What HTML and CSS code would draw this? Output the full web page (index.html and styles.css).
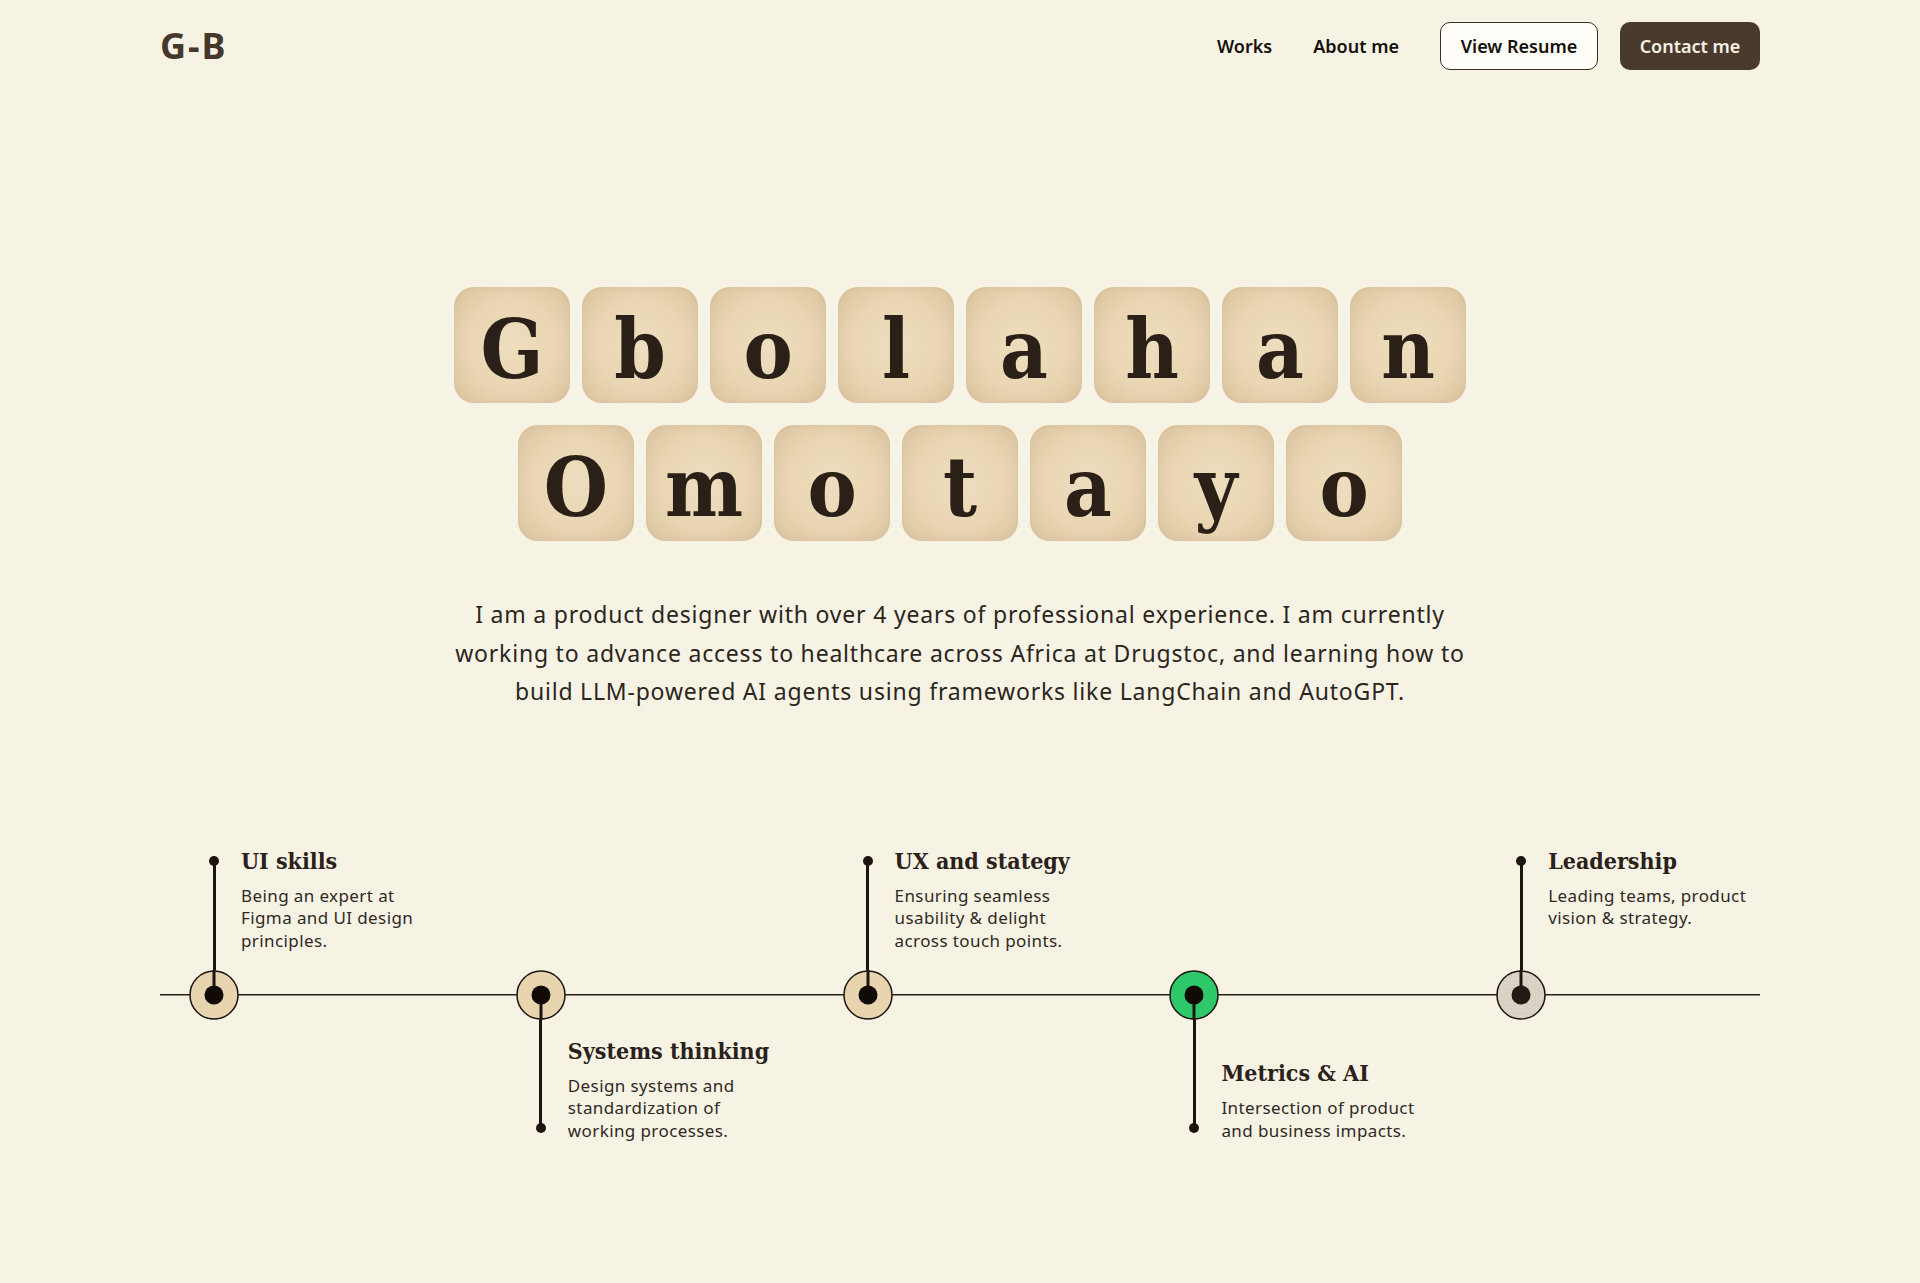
FILE: index.html
```html
<!DOCTYPE html>
<html>
<head>
    <meta charset="UTF-8">
    <title>Gbolahan Omotayo — Product Designer</title>
    <link rel="stylesheet" href="styles.css">
</head>
<body>
<div class="page">
    <header class="top-bar">
        <a class="logo" href="#">G-B</a>
        <nav class="nav">
            <a class="nav-link" href="#">Works</a>
            <a class="nav-link" href="#">About me</a>
            <a class="btn btn-outline" href="#">View Resume</a>
            <a class="btn btn-dark" href="#">Contact me</a>
        </nav>
    </header>

    <section class="hero">
        <div class="tile-row">
            <span class="tile">G</span>
            <span class="tile">b</span>
            <span class="tile">o</span>
            <span class="tile">l</span>
            <span class="tile">a</span>
            <span class="tile">h</span>
            <span class="tile">a</span>
            <span class="tile">n</span>
        </div>
        <div class="tile-row">
            <span class="tile">O</span>
            <span class="tile">m</span>
            <span class="tile">o</span>
            <span class="tile">t</span>
            <span class="tile">a</span>
            <span class="tile">y</span>
            <span class="tile">o</span>
        </div>
        <p class="intro">
            I am a product designer with over 4 years of professional experience. I am currently<br>
            working to advance access to healthcare across Africa at Drugstoc, and learning how to<br>
            build LLM-powered AI agents using frameworks like LangChain and AutoGPT.
        </p>
    </section>

    <section class="timeline">
        <div class="skill up">
            <div class="stem"><span class="stem-dot"></span><span class="stem-line"></span></div>
            <div class="skill-text">
                <h3>UI skills</h3>
                <p>Being an expert at<br>Figma and UI design<br>principles.</p>
            </div>
            <svg class="node" width="50" height="50" viewBox="0 0 50 50">
                <circle cx="25" cy="25" r="24" fill="#e9d4b0" stroke="#1c140e" stroke-width="1.5"/>
                <line x1="25" y1="0" x2="25" y2="25" stroke="#1c140e" stroke-width="3"/>
                <circle cx="25" cy="25" r="9.5" fill="#110b07"/>
            </svg>
        </div>

        <div class="skill down">
            <svg class="node" width="50" height="50" viewBox="0 0 50 50">
                <circle cx="25" cy="25" r="24" fill="#e9d4b0" stroke="#1c140e" stroke-width="1.5"/>
                <line x1="25" y1="25" x2="25" y2="50" stroke="#1c140e" stroke-width="3"/>
                <circle cx="25" cy="25" r="9.5" fill="#110b07"/>
            </svg>
            <div class="stem"><span class="stem-line"></span><span class="stem-dot"></span></div>
            <div class="skill-text">
                <h3>Systems thinking</h3>
                <p>Design systems and<br>standardization of<br>working processes.</p>
            </div>
        </div>

        <div class="skill up">
            <div class="stem"><span class="stem-dot"></span><span class="stem-line"></span></div>
            <div class="skill-text">
                <h3>UX and stategy</h3>
                <p>Ensuring seamless<br>usability &amp; delight<br>across touch points.</p>
            </div>
            <svg class="node" width="50" height="50" viewBox="0 0 50 50">
                <circle cx="25" cy="25" r="24" fill="#e9d4b0" stroke="#1c140e" stroke-width="1.5"/>
                <line x1="25" y1="0" x2="25" y2="25" stroke="#1c140e" stroke-width="3"/>
                <circle cx="25" cy="25" r="9.5" fill="#110b07"/>
            </svg>
        </div>

        <div class="skill down">
            <svg class="node" width="50" height="50" viewBox="0 0 50 50">
                <circle cx="25" cy="25" r="24" fill="#2ec86a" stroke="#1c140e" stroke-width="1.5"/>
                <line x1="25" y1="25" x2="25" y2="50" stroke="#1c140e" stroke-width="3"/>
                <circle cx="25" cy="25" r="9.5" fill="#110b07"/>
            </svg>
            <div class="stem"><span class="stem-line"></span><span class="stem-dot"></span></div>
            <div class="skill-text">
                <h3>Metrics &amp; AI</h3>
                <p>Intersection of product<br>and business impacts.</p>
            </div>
        </div>

        <div class="skill up">
            <div class="stem"><span class="stem-dot"></span><span class="stem-line"></span></div>
            <div class="skill-text">
                <h3>Leadership</h3>
                <p>Leading teams, product<br>vision &amp; strategy.</p>
            </div>
            <svg class="node" width="50" height="50" viewBox="0 0 50 50">
                <defs>
                    <pattern id="grain" width="4" height="4" patternUnits="userSpaceOnUse">
                        <rect width="4" height="4" fill="#d8d1c4"/>
                        <circle cx="1" cy="1" r="0.6" fill="#ece7dc"/>
                    </pattern>
                </defs>
                <circle cx="25" cy="25" r="24" fill="url(#grain)" stroke="#1c140e" stroke-width="1.5"/>
                <line x1="25" y1="0" x2="25" y2="25" stroke="#1c140e" stroke-width="3"/>
                <circle cx="25" cy="25" r="9.5" fill="#231a14"/>
            </svg>
        </div>
    </section>
</div>
</body>
</html>
```

FILE: styles.css
```css
body {
    margin: 0;
    background-color: #f7f3e4;
    color: #2a221b;
    font-family: "Noto Sans", "Open Sans", sans-serif;
}
a {
    text-decoration: none;
    color: inherit;
}
.page {
    width: 1600px;
    margin: 0 auto;
    padding-bottom: 120px;
}

/* header */
.top-bar {
    display: flex;
    justify-content: space-between;
    align-items: center;
    padding-top: 22px;
}
.logo {
    font-size: 36px;
    font-weight: bold;
    letter-spacing: 2px;
    color: #45372b;
    line-height: 48px;
}
.nav {
    display: flex;
    align-items: center;
}
.nav-link {
    font-size: 18px;
    font-weight: 600;
    color: #16110d;
    margin-right: 41px;
}
.btn {
    display: flex;
    align-items: center;
    justify-content: center;
    height: 48px;
    box-sizing: border-box;
    border-radius: 10px;
    font-size: 18px;
    font-weight: 600;
}
.btn-outline {
    width: 158px;
    background-color: #fffdf8;
    border: 1.5px solid #3b3027;
    color: #16110d;
}
.btn-dark {
    width: 140px;
    margin-left: 22px;
    background-color: #4a3a2d;
    color: #f7f1e2;
}

/* name tiles */
.hero {
    margin-top: 217px;
    display: flex;
    flex-direction: column;
    align-items: center;
}
.tile-row {
    display: flex;
    gap: 12px;
    margin-bottom: 22px;
}
.tile {
    width: 116px;
    height: 116px;
    box-sizing: border-box;
    padding-top: 8px;
    display: flex;
    align-items: center;
    justify-content: center;
    border-radius: 20px;
    background: radial-gradient(circle at 50% 50%, #eedebf 0%, #e9d5b2 55%, #e0c9a4 85%, #d9c6a8 100%);
    box-shadow: inset 0 0 6px rgba(190, 170, 140, 0.35);
    font-family: "DejaVu Serif", serif;
    font-stretch: condensed;
    font-weight: bold;
    font-size: 82px;
    color: #2b2018;
}
.intro {
    margin: 32px 0 0;
    text-align: center;
    font-size: 23px;
    letter-spacing: 0.8px;
    line-height: 38.5px;
    color: #2b2520;
}

/* skills timeline */
.timeline {
    margin-top: 134px;
    display: grid;
    grid-template-columns: repeat(5, 1fr);
    column-gap: 34px;
    background: linear-gradient(#2a211a, #2a211a) no-repeat 0 50% / 100% 1.5px;
}
.skill {
    display: grid;
    grid-template-columns: 50px 1fr;
    grid-template-rows: 125px 50px 125px;
    column-gap: 2px;
    padding-left: 29px;
}
.node {
    grid-column: 1;
    grid-row: 2;
    display: block;
}
.stem {
    grid-column: 1;
    display: flex;
    flex-direction: column;
    align-items: center;
}
.up .stem {
    grid-row: 1;
}
.down .stem {
    grid-row: 3;
}
.stem-dot {
    width: 10px;
    height: 10px;
    border-radius: 50%;
    background-color: #1c140e;
    flex-shrink: 0;
}
.up .stem-dot {
    margin-top: 11px;
}
.down .stem-dot {
    margin-bottom: 12px;
}
.stem-line {
    width: 3px;
    flex: 1;
    background-color: #1c140e;
}
.up .stem-line {
    margin-top: -2px;
}
.down .stem-line {
    margin-bottom: -2px;
}
.skill-text {
    grid-column: 2;
}
.up .skill-text {
    grid-row: 1;
}
.down .skill-text {
    grid-row: 3;
    align-self: end;
    margin-bottom: 2px;
}
.skill-text h3 {
    margin: 0 0 8px;
    font-family: "DejaVu Serif", serif;
    font-stretch: condensed;
    font-weight: bold;
    font-size: 23px;
    line-height: 32px;
    color: #2a211a;
}
.skill-text p {
    margin: 0;
    font-size: 17px;
    letter-spacing: 0.4px;
    line-height: 22.6px;
    color: #2f2923;
}
```
